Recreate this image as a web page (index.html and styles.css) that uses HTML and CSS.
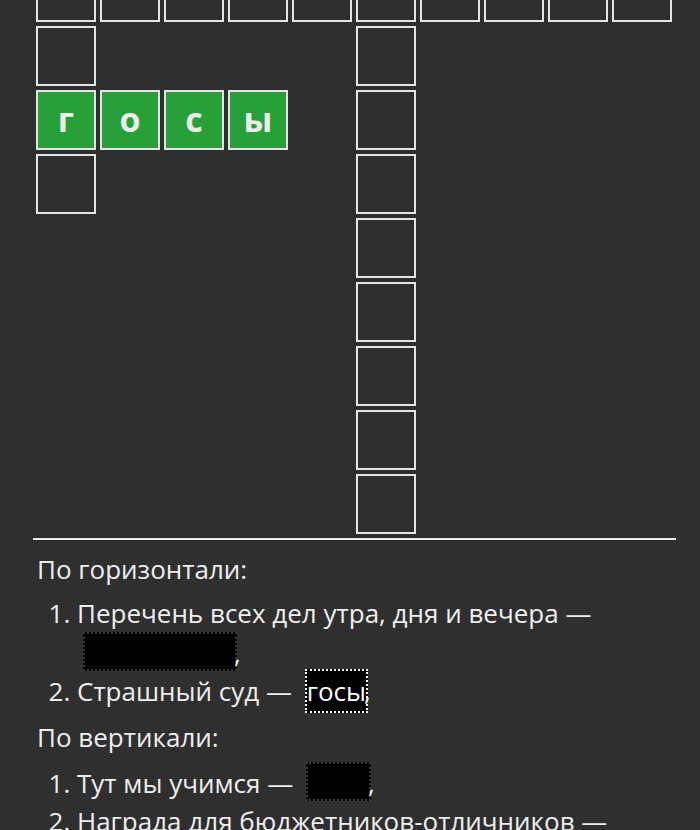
FILE: index.html
```html
<!DOCTYPE html>
<html lang="ru">
<head>
    <meta charset="UTF-8">
    <meta name="viewport" content="width=device-width, initial-scale=1.0">
    <title>Кроссворд</title>
    <link rel="stylesheet" href="styles.css">
</head>
<body>
<div class="page">
    <div class="board">
        <!-- row 1 -->
        <div class="cell"></div><div class="cell"></div><div class="cell"></div><div class="cell"></div><div class="cell"></div>
        <div class="cell"></div><div class="cell"></div><div class="cell"></div><div class="cell"></div><div class="cell"></div>
        <!-- row 2 -->
        <div class="cell"></div><div class="gap"></div><div class="gap"></div><div class="gap"></div><div class="gap"></div>
        <div class="cell"></div><div class="gap"></div><div class="gap"></div><div class="gap"></div><div class="gap"></div>
        <!-- row 3 -->
        <div class="cell solved">г</div><div class="cell solved">о</div><div class="cell solved">с</div><div class="cell solved">ы</div><div class="gap"></div>
        <div class="cell"></div><div class="gap"></div><div class="gap"></div><div class="gap"></div><div class="gap"></div>
        <!-- row 4 -->
        <div class="cell"></div><div class="gap"></div><div class="gap"></div><div class="gap"></div><div class="gap"></div>
        <div class="cell"></div><div class="gap"></div><div class="gap"></div><div class="gap"></div><div class="gap"></div>
        <!-- rows 5-9 -->
        <div class="gap"></div><div class="gap"></div><div class="gap"></div><div class="gap"></div><div class="gap"></div>
        <div class="cell"></div><div class="gap"></div><div class="gap"></div><div class="gap"></div><div class="gap"></div>
        <div class="gap"></div><div class="gap"></div><div class="gap"></div><div class="gap"></div><div class="gap"></div>
        <div class="cell"></div><div class="gap"></div><div class="gap"></div><div class="gap"></div><div class="gap"></div>
        <div class="gap"></div><div class="gap"></div><div class="gap"></div><div class="gap"></div><div class="gap"></div>
        <div class="cell"></div><div class="gap"></div><div class="gap"></div><div class="gap"></div><div class="gap"></div>
        <div class="gap"></div><div class="gap"></div><div class="gap"></div><div class="gap"></div><div class="gap"></div>
        <div class="cell"></div><div class="gap"></div><div class="gap"></div><div class="gap"></div><div class="gap"></div>
        <div class="gap"></div><div class="gap"></div><div class="gap"></div><div class="gap"></div><div class="gap"></div>
        <div class="cell"></div><div class="gap"></div><div class="gap"></div><div class="gap"></div><div class="gap"></div>
    </div>

    <hr>

    <div class="clues">
        <p class="clues-title">По горизонтали:</p>
        <ol>
            <li>Перечень всех дел утра, дня и вечера — <span class="answer hidden w-long">&nbsp;</span>,</li>
            <li>Страшный суд — <span class="answer shown">госы</span>,</li>
        </ol>
        <p class="clues-title">По вертикали:</p>
        <ol>
            <li>Тут мы учимся — <span class="answer hidden w-short">&nbsp;</span>,</li>
            <li>Награда для бюджетников-отличников — <span class="answer hidden w-mid">&nbsp;</span>.</li>
        </ol>
    </div>
</div>
</body>
</html>
```

FILE: styles.css
```css
body {
    margin: 0;
    background-color: #2f2f2f;
    color: #eeeeee;
    font-family: "Open Sans", "Noto Sans", sans-serif;
}

.page {
    width: 644px;
    margin-left: 32px;
}

.board {
    display: grid;
    grid-template-columns: repeat(10, 60px);
    grid-auto-rows: 60px;
    gap: 4px;
    padding: 4px;
    margin-top: -42px;
}

.cell {
    box-sizing: border-box;
    border: 2px solid #e4e4e4;
    display: flex;
    align-items: center;
    justify-content: center;
    font-size: 34px;
    font-weight: bold;
    color: #ececec;
}

.cell.solved {
    background-color: #28a03a;
    padding-bottom: 2px;
}

hr {
    border: none;
    border-top: 2px solid #eeeeee;
    margin: 0 0 0 1px;
}

.clues {
    font-size: 26px;
    line-height: 38px;
}

.clues-title {
    margin: 10px 0 0 5px;
}

ol {
    margin: 7px 0 8px;
    padding-left: 45px;
}

ol + .clues-title {
    margin-top: 0;
}

.clues-title + ol {
    margin-top: 6px;
}

.answer {
    background-color: #000000;
    outline: 2px dotted #3a3a3a;
    outline-offset: -2px;
}

.answer.hidden {
    display: inline-block;
    line-height: 36px;
    padding-top: 3px;
    margin-left: 6px;
    margin-right: -3px;
    color: #000000;
}

.answer.shown {
    padding: 4px 2px 4px;
    margin-left: 6px;
    margin-right: -4px;
    outline-color: #ffffff;
    color: #ffffff;
}

.w-long {
    width: 154px;
}

.w-short {
    width: 65px;
}

.w-mid {
    width: 140px;
}
```
